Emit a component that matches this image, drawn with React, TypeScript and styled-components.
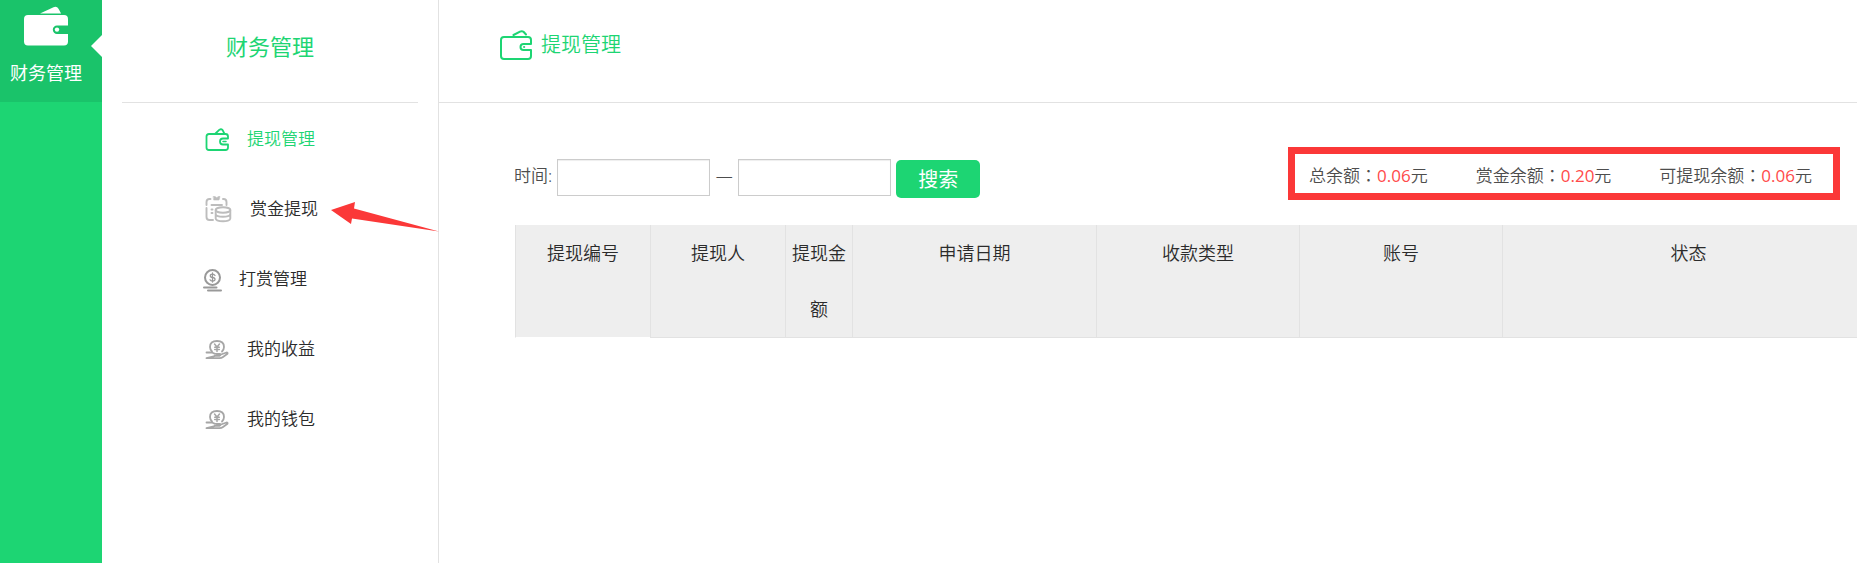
import React from "react";
import styled, { createGlobalStyle } from "styled-components";

const GREEN = "#1dd573";
const GREEN_DARK = "#1ac36a";
const LINE = "#e2e2e2";
const MARK = "#fb3838";

const GlobalStyle = createGlobalStyle`
  *, *::before, *::after { box-sizing: border-box; }
  body {
    margin: 0;
    background: #fff;
    color: #2b2b2b;
    font-family: "Noto Sans", "Noto Sans CJK SC", sans-serif;
    font-weight: 350;
    overflow-x: hidden;
  }
  a { color: inherit; text-decoration: none; }
  svg { display: block; flex: none; }
`;

const Page = styled.div`
  display: flex;
  min-height: 100vh;
`;

const Rail = styled.nav`
  flex: 0 0 102px;
  background: ${GREEN};
`;

const RailLink = styled.a`
  position: relative;
  display: flex;
  flex-direction: column;
  align-items: center;
  gap: 14px;
  height: 102px;
  padding: 6px 10px 0 0;
  background: ${GREEN_DARK};
  color: #fff;
  font-size: 18px;
  line-height: 26px;
  font-weight: 400;

  &::after {
    content: "";
    position: absolute;
    top: 35px;
    right: 0;
    border: solid transparent;
    border-width: 11px 11px 11px 0;
    border-right-color: #fff;
  }
`;

const Sidebar = styled.aside`
  flex: 0 0 337px;
  border-right: 1px solid ${LINE};
`;

const SidebarTitle = styled.h2`
  margin: 0 20px;
  padding-bottom: 10px;
  border-bottom: 1px solid ${LINE};
  color: ${GREEN};
  font-size: 22px;
  line-height: 92px;
  font-weight: 400;
  text-align: center;
`;

const Menu = styled.ul`
  margin: 0;
  padding: 1px 0 0;
  list-style: none;
`;

const MenuLink = styled.a<{ $active?: boolean }>`
  position: relative;
  display: flex;
  align-items: center;
  gap: 17px;
  height: 70px;
  padding-left: 101px;
  color: ${(p) => (p.$active ? GREEN : "#2b2b2b")};
  font-size: 17px;
  line-height: 24px;
`;

const MenuIcon = styled.span`
  padding-top: 2px;
`;

const Pointer = styled.svg`
  position: absolute;
  left: 229px;
  top: 28px;
`;

const Main = styled.main`
  flex: 1;
  min-width: 0;
  overflow: hidden;
`;

const Header = styled.header`
  display: flex;
  align-items: center;
  gap: 9px;
  height: 103px;
  padding: 0 0 12px 61px;
  border-bottom: 1px solid ${LINE};
`;

const HeaderTitle = styled.h1`
  margin: 0;
  color: ${GREEN};
  font-size: 20px;
  line-height: 28px;
  font-weight: 350;
`;

const Toolbar = styled.div`
  display: flex;
  justify-content: space-between;
  align-items: flex-end;
  padding: 44px 17px 25px 75px;
`;

const SearchForm = styled.form`
  display: flex;
  align-items: flex-start;
  gap: 5px;
  padding-bottom: 2px;
  color: #4d4d4d;
  font-size: 17px;
  line-height: 34px;
`;

const Dash = styled.span`
  width: 18px;
  text-align: center;
`;

const DateInput = styled.input`
  width: 153px;
  height: 37px;
  margin: 0;
  padding: 0 8px;
  border: 1px solid #ccc;
  background: #fff;
  box-shadow: inset 0 1px 1px rgba(0, 0, 0, 0.07);
  font: inherit;
`;

const SearchButton = styled.button`
  width: 84px;
  height: 38px;
  margin: 1px 0 0;
  padding: 0 0 2px;
  border: 0;
  border-radius: 5px;
  background: ${GREEN};
  color: #fff;
  font-family: inherit;
  font-size: 20px;
  font-weight: 400;
`;

const Balances = styled.div`
  display: flex;
  align-items: center;
  gap: 48px;
  height: 53px;
  padding: 3px 21px 0 14px;
  border: 7px solid ${MARK};
  color: #4d4d4d;
  font-size: 17px;
  line-height: 24px;
  white-space: nowrap;
`;

/* The traditional face centres the full-width colon in its box. */
const Colon = styled.span`
  font-family: "Noto Sans CJK TC", sans-serif;
`;

const Amount = styled.span`
  color: #ff4a4a;
  font-family: "Open Sans", "Noto Sans", sans-serif;
  font-weight: 400;
`;

const Table = styled.table`
  width: calc(100% - 59px);
  margin-left: 76px;
  border-spacing: 0;
  table-layout: fixed;
`;

const Col = styled.col<{ $width?: number }>`
  width: ${(p) => (p.$width ? `${p.$width}px` : "auto")};
`;

const Th = styled.th`
  padding: 0 5px;
  border-left: 1px solid ${LINE};
  border-bottom: 1px solid ${LINE};
  background: #eee;
  font-size: 18px;
  line-height: 56px;
  font-weight: 350;
  text-align: center;
  vertical-align: top;

  &:first-child { border-bottom-color: #fff; }
`;

const WalletSolid = () => (
  <svg width="44" height="40" viewBox="0 0 44 40" fill="#fff" aria-hidden="true">
    <path d="M16 7.600 29.500 1.200q3.400-1.200 5 1.600l2.600 4.800z" />
    <path d="M4 9h36q4 0 4 4v6.500H33a4.200 4.200 0 0 0 0 8.400h11V35.500q0 4-4 4H4q-4 0-4-4V13q0-4 4-4z" />
    <circle cx="33" cy="23.600" r="2.200" />
  </svg>
);

const WalletLarge = () => (
  <svg width="32" height="30" viewBox="0 0 32 30" fill="none" stroke={GREEN} strokeWidth="2" strokeLinecap="round" strokeLinejoin="round" aria-hidden="true">
    <path d="M31 14V10q0-3-3-3H4Q1 7 1 10v16q0 3 3 3h24q3 0 3-3v-6H23.500a3 3 0 0 1 0-6z" />
    <path d="M13.500 5 20 1.600q2-1 3.500.2L26 4.500" />
    <circle cx="24" cy="17" r=".6" strokeWidth="1" />
  </svg>
);

const WalletSmall = () => (
  <svg width="27" height="24" viewBox="-2 0 27 24" fill="none" stroke={GREEN} strokeWidth="1.800" strokeLinecap="round" strokeLinejoin="round" aria-hidden="true">
    <path d="M23 10.500V8.500q0-2.500-2.500-2.500H4Q1.500 6 1.500 8.500v11Q1.500 22 4 22h16.500q2.500 0 2.500-2.500v-3H18a3 3 0 0 1 0-6z" />
    <path d="M10.500 5.500 14.500 1.700q1.600-1 3 .2l1.800 3.600" />
    <path d="M18 13.500h3" strokeWidth="1.500" />
  </svg>
);

const ClipboardCoins = () => (
  <svg width="30" height="28" viewBox="-2 0 30 28" fill="none" stroke="#bdbdbd" strokeWidth="1.900" strokeLinecap="round" aria-hidden="true">
    <path d="M5.500 3H4.500Q1.500 3 1.500 6v3M1.500 12v9q0 3 3 3H8M18 3h.5q3 0 3 3v3" />
    <path d="M8.500 .5H10l1.700 1.200L13.500 .5H15L14 4H9z" fill="#bdbdbd" strokeWidth=".6" />
    <path d="M6.500 9H17M6.500 13.500h1M6.500 17h1" />
    <ellipse cx="18" cy="14" rx="7.300" ry="2.700" />
    <path d="M10.700 14v8.500c0 3.600 14.600 3.600 14.600 0V14M10.700 18c0 3.600 14.600 3.600 14.600 0" />
  </svg>
);

const CoinStand = () => (
  <svg width="19" height="23" viewBox="0 0 19 23" fill="none" stroke="#999" strokeWidth="2" strokeLinecap="round" aria-hidden="true">
    <circle cx="9.500" cy="8.500" r="7.500" />
    <path d="M12 6.500q-.8-1.300-2.500-1.300-2.200 0-2.200 1.600t2.300 1.700 2.400 1.800-2.500 1.700q-1.800 0-2.500-1.300M9.500 4v9" strokeWidth="1.300" />
    <path d="M1 18.500h12.500M5 21.500h13" />
  </svg>
);

const HandYen = () => (
  <svg width="27" height="20" viewBox="-2 0 27 20" fill="none" stroke="#a6a6a6" strokeWidth="1.800" strokeLinecap="round" strokeLinejoin="round" aria-hidden="true">
    <path d="M7 11.500Q5 9.500 5 7q0-6 7-6t7 6q0 2.500-2 4.500" />
    <path d="M9.500 4l2.500 3L14.500 4M12 7v4.500M9.700 7.300h4.600M9.700 9.500h4.600" strokeWidth="1.500" />
    <path d="M1.500 12.500H7l3 1.300h5q1.200 1.500-.5 2H9.500M16 14.500l5.500-2q1.500 0 1 1.200L18 17q-1.500 1.200-3.500 1.200h-13z" />
  </svg>
);

const menu = [
  { label: "提现管理", Icon: WalletSmall, active: true },
  { label: "赏金提现", Icon: ClipboardCoins, pointed: true },
  { label: "打赏管理", Icon: CoinStand },
  { label: "我的收益", Icon: HandYen },
  { label: "我的钱包", Icon: HandYen },
];

const balances = [
  { label: "总余额", value: "0.06" },
  { label: "赏金余额", value: "0.20" },
  { label: "可提现余额", value: "0.06" },
];

const columns: { label: string; width?: number }[] = [
  { label: "提现编号", width: 135 },
  { label: "提现人", width: 135 },
  { label: "提现金额", width: 67 },
  { label: "申请日期", width: 244 },
  { label: "收款类型", width: 203 },
  { label: "账号", width: 203 },
  { label: "状态" },
];

export default function App() {
  return (
    <>
      <GlobalStyle />
      <Page>
        <Rail>
          <RailLink href="#finance">
            <WalletSolid />
            财务管理
          </RailLink>
        </Rail>
        <Sidebar>
          <SidebarTitle>财务管理</SidebarTitle>
          <Menu>
            {menu.map(({ label, Icon, active, pointed }) => (
              <li key={label}>
                <MenuLink href="#menu" $active={active}>
                  <MenuIcon>
                    <Icon />
                  </MenuIcon>
                  {label}
                  {pointed && (
                    <Pointer width="108" height="30" viewBox="0 0 108 30" fill={MARK} aria-hidden="true">
                      <path d="M0 8 24 0 23 6.500 108 29.500 21 16.500 20 22z" />
                    </Pointer>
                  )}
                </MenuLink>
              </li>
            ))}
          </Menu>
        </Sidebar>
        <Main>
          <Header>
            <WalletLarge />
            <HeaderTitle>提现管理</HeaderTitle>
          </Header>
          <Toolbar>
            <SearchForm onSubmit={(e) => e.preventDefault()}>
              <label htmlFor="start">时间:</label>
              <DateInput id="start" type="text" />
              <Dash>—</Dash>
              <DateInput id="end" type="text" aria-label="结束时间" />
              <SearchButton type="submit">搜索</SearchButton>
            </SearchForm>
            <Balances>
              {balances.map((b) => (
                <span key={b.label}>
                  {b.label}
                  <Colon>：</Colon>
                  <Amount>{b.value}</Amount>元
                </span>
              ))}
            </Balances>
          </Toolbar>
          <Table>
            <colgroup>
              {columns.map((c) => (
                <Col key={c.label} $width={c.width} />
              ))}
            </colgroup>
            <thead>
              <tr>
                {columns.map((c) => (
                  <Th key={c.label} scope="col">{c.label}</Th>
                ))}
              </tr>
            </thead>
          </Table>
        </Main>
      </Page>
    </>
  );
}
